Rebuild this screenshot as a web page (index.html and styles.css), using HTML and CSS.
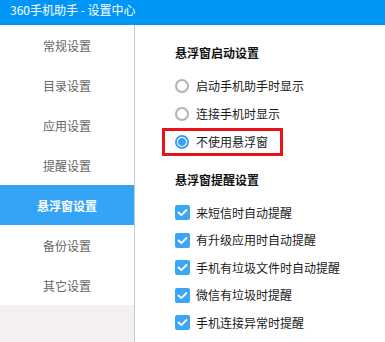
FILE: index.html
```html
<!DOCTYPE html>
<html lang="zh-CN">
<head>
<meta charset="utf-8">
<title>360手机助手 - 设置中心</title>
<link rel="stylesheet" href="styles.css">
</head>
<body>
<div class="window">
  <div class="titlebar">360手机助手 - 设置中心</div>
  <div class="content">
    <nav class="sidebar">
      <div class="nav-item">常规设置</div>
      <div class="nav-item">目录设置</div>
      <div class="nav-item">应用设置</div>
      <div class="nav-item">提醒设置</div>
      <div class="nav-item active">悬浮窗设置</div>
      <div class="nav-item">备份设置</div>
      <div class="nav-item">其它设置</div>
      <div class="nav-fill"></div>
    </nav>
    <main class="panel">
      <div class="section-title">悬浮窗启动设置</div>
      <div class="radio-list">
        <div class="row"><span class="radio"></span><span class="label">启动手机助手时显示</span></div>
        <div class="row"><span class="radio"></span><span class="label">连接手机时显示</span></div>
        <div class="row highlight"><span class="radio checked"></span><span class="label">不使用悬浮窗</span></div>
      </div>
      <div class="section-title second">悬浮窗提醒设置</div>
      <div class="check-list">
        <div class="row crow"><span class="check"><svg viewBox="0 0 15 15" width="15" height="15"><polyline points="3.5,7.5 6.3,10.2 11.5,5" fill="none" stroke="#fff" stroke-width="1.8" stroke-linecap="round" stroke-linejoin="round"/></svg></span><span class="label">来短信时自动提醒</span></div>
        <div class="row crow"><span class="check"><svg viewBox="0 0 15 15" width="15" height="15"><polyline points="3.5,7.5 6.3,10.2 11.5,5" fill="none" stroke="#fff" stroke-width="1.8" stroke-linecap="round" stroke-linejoin="round"/></svg></span><span class="label">有升级应用时自动提醒</span></div>
        <div class="row crow"><span class="check"><svg viewBox="0 0 15 15" width="15" height="15"><polyline points="3.5,7.5 6.3,10.2 11.5,5" fill="none" stroke="#fff" stroke-width="1.8" stroke-linecap="round" stroke-linejoin="round"/></svg></span><span class="label">手机有垃圾文件时自动提醒</span></div>
        <div class="row crow"><span class="check"><svg viewBox="0 0 15 15" width="15" height="15"><polyline points="3.5,7.5 6.3,10.2 11.5,5" fill="none" stroke="#fff" stroke-width="1.8" stroke-linecap="round" stroke-linejoin="round"/></svg></span><span class="label">微信有垃圾时提醒</span></div>
        <div class="row crow"><span class="check"><svg viewBox="0 0 15 15" width="15" height="15"><polyline points="3.5,7.5 6.3,10.2 11.5,5" fill="none" stroke="#fff" stroke-width="1.8" stroke-linecap="round" stroke-linejoin="round"/></svg></span><span class="label">手机连接异常时提醒</span></div>
      </div>
    </main>
  </div>
</div>
</body>
</html>
```
FILE: styles.css
```css
* { box-sizing: border-box; }
html, body { margin: 0; padding: 0; }
body {
  width: 385px;
  height: 342px;
  overflow: hidden;
  background: #fff;
  font-family: "Noto Sans CJK SC", "Noto Sans", sans-serif;
  font-size: 12px;
  color: #1a1a1a;
}
.window { display: flex; flex-direction: column; height: 342px; }
.titlebar {
  height: 25px;
  background: #0096f6;
  color: #fff;
  font-size: 12px;
  line-height: 14px;
  padding: 3px 0 0 10px;
}
.content { flex: 1; display: flex; min-height: 0; }
.sidebar {
  width: 135px;
  border-right: 1px solid #c3cbd3;
  display: flex;
  flex-direction: column;
}
.nav-item {
  height: 40px;
  display: flex;
  align-items: center;
  justify-content: center;
  color: #666;
  font-size: 12px;
}
.nav-item.active {
  background: #35a4f5;
  color: #fff;
  font-weight: bold;
}
.nav-fill { flex: 1; background: #f3f0ef; }
.panel { flex: 1; padding: 20px 0 0 40px; }
.section-title {
  font-weight: bold;
  line-height: 16px;
  color: #111;
}
.section-title.second { margin-top: 16px; }
.radio-list { margin-top: 11px; display: flex; flex-direction: column; align-items: flex-start; }
.check-list { margin-top: 11px; display: flex; flex-direction: column; align-items: flex-start; }
.row {
  height: 28px;
  display: flex;
  align-items: center;
  gap: 7px;
}
.crow { height: 27.5px; gap: 6px; }
.label { line-height: 16px; color: #1a1a1a; }
.radio {
  width: 14px;
  height: 14px;
  border-radius: 50%;
  border: 2px solid #b3b3b3;
  background: #fff;
}
.radio.checked {
  border-color: #3d9ff0;
  background: radial-gradient(circle, #3d9ff0 0 3.6px, #fff 4.2px);
}
.highlight {
  margin-left: -13px;
  padding: 0 12px 0 10px;
  border: 3px solid #e8121b;
  height: 28px;
}
.check {
  width: 15px;
  height: 15px;
  border-radius: 2px;
  background: #3ca6f6;
  display: block;
}
.check svg { display: block; }
```
